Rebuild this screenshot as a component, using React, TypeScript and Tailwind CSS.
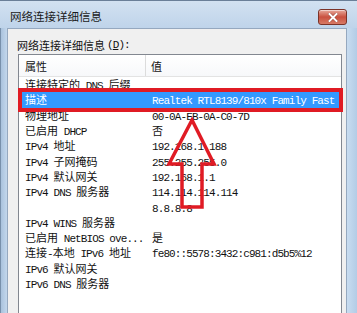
import React from "react";

const CJK = /([\u3000-\u9fff\uff00-\uffef]+)/;

function T({ s }: { s: string }) {
  const parts = s.split(CJK).filter((p) => p.length > 0);
  return (
    <>
      {parts.map((p, i) =>
        /[\u3000-\u9fff\uff00-\uffef]/.test(p) ? (
          <span key={i} className="font-['Noto_Sans_CJK_SC',sans-serif] tracking-normal leading-[15px]">
            {p}
          </span>
        ) : (
          <span key={i} className="font-['Liberation_Mono',monospace] tracking-[-0.9px] leading-[15px]">
            {p}
          </span>
        )
      )}
    </>
  );
}

const rows: [string, string][] = [
  ["连接特定的 DNS 后缀", ""],
  ["描述", "Realtek RTL8139/810x Family Fast"],
  ["物理地址", "00-0A-EB-0A-C0-7D"],
  ["已启用 DHCP", "否"],
  ["IPv4 地址", "192.168.1.188"],
  ["IPv4 子网掩码", "255.255.255.0"],
  ["IPv4 默认网关", "192.168.1.1"],
  ["IPv4 DNS 服务器", "114.114.114.114"],
  ["", "8.8.8.8"],
  ["IPv4 WINS 服务器", ""],
  ["已启用 NetBIOS ove...", "是"],
  ["连接-本地 IPv6 地址", "fe80::5578:3432:c981:d5b5%12"],
  ["IPv6 默认网关", ""],
  ["IPv6 DNS 服务器", ""],
];

export default function App() {
  return (
    <div className="relative w-[357px] h-[313px] overflow-hidden bg-[#bcd3eb] text-[11px] text-[#111]">
      {/* title bar */}
      <div className="flex items-start h-[28px] border-t border-[#6a7f98] bg-gradient-to-b from-[#d2e1f1] to-[#bfd4ea]">
        <span className="mt-[8px] ml-[10px] leading-[15px] text-[11.5px] font-['Noto_Sans_CJK_SC',sans-serif] text-[#1a1a1a]">
          网络连接详细信息
        </span>
        <div className="ml-auto mr-[10px] mt-[8px] w-[29px] h-[16px] rounded-[3px] border border-[#7b3328] bg-gradient-to-b from-[#e6a99d] via-[#c9503f] to-[#d77a66] flex items-center justify-center shadow-[inset_0_1px_0_rgba(255,255,255,0.5)]">
          <svg width="10" height="9" viewBox="0 0 10 9">
            <path d="M1.5 1 L8.5 8 M8.5 1 L1.5 8" stroke="#5a1a12" strokeWidth="3" strokeLinecap="square" opacity="0.5" />
            <path d="M1.5 1 L8.5 8 M8.5 1 L1.5 8" stroke="#ffffff" strokeWidth="2" strokeLinecap="square" />
          </svg>
        </div>
      </div>

      {/* frame + body */}
      <div className="flex h-[285px]">
        <div className="w-[7px] border-l border-[#7890ab] bg-gradient-to-r from-[#a9c2dd] to-[#c3d7ec]" />
        <div className="w-[340px] bg-[#f0f0f0] border-l border-t border-r border-[#95a8bf] pl-[10px] pt-[9px]">
          <div className="h-[14px] leading-[14px] flex items-center text-[11px] ml-[-1px]">
            <span className="font-['Noto_Sans_CJK_SC',sans-serif]">网络连接详细信息</span>
            <span className="font-['Liberation_Mono',monospace] tracking-[-0.9px] ml-[2px]">
              (<span className="underline">D</span>):
            </span>
          </div>
          <div className="mt-[2px] w-[324px] h-[260px] border border-[#828790] bg-white overflow-hidden">
            {/* header */}
            <div className="flex h-[22px] border-b border-[#e3e3e3] bg-gradient-to-b from-white to-[#f7f8fa]">
              <div className="w-[127px] border-r border-[#dcdcdc] pl-[6px] flex items-center pt-[2px]">
                <T s="属性" />
              </div>
              <div className="flex-1 pl-[5px] flex items-center pt-[2px]">
                <T s="值" />
              </div>
            </div>
            {rows.map(([k, v], i) => {
              const sel = i === 1;
              return (
                <div
                  key={i}
                  className={`flex h-[15.3px] leading-[15px] items-center whitespace-nowrap ${
                    sel ? "bg-[#3399ff] text-white" : "text-[#111]"
                  }`}
                >
                  <div className="w-[127px] pl-[6px] h-[15px] leading-[15px]">
                    <T s={k} />
                  </div>
                  <div className="flex-1 pl-[6px] h-[15px] leading-[15px]">
                    <T s={v} />
                  </div>
                </div>
              );
            })}
          </div>
        </div>
        <div className="w-[10px] bg-gradient-to-r from-[#c8dcf0] to-[#b3cce6]" />
      </div>

      {/* red annotation box */}
      <div className="absolute left-[18px] top-[88px] w-[325px] h-[24px] border-[4px] border-[#e01b24]" />

      {/* red arrow */}
      <svg className="absolute left-0 top-0" width="357" height="313" viewBox="0 0 357 313">
        <path
          d="M192 120 L214 164 L202 164 L202 207 L182 207 L182 164 L169 164 Z"
          fill="none"
          stroke="#e01b24"
          strokeWidth="3.5"
          strokeLinejoin="miter"
        />
      </svg>
    </div>
  );
}
